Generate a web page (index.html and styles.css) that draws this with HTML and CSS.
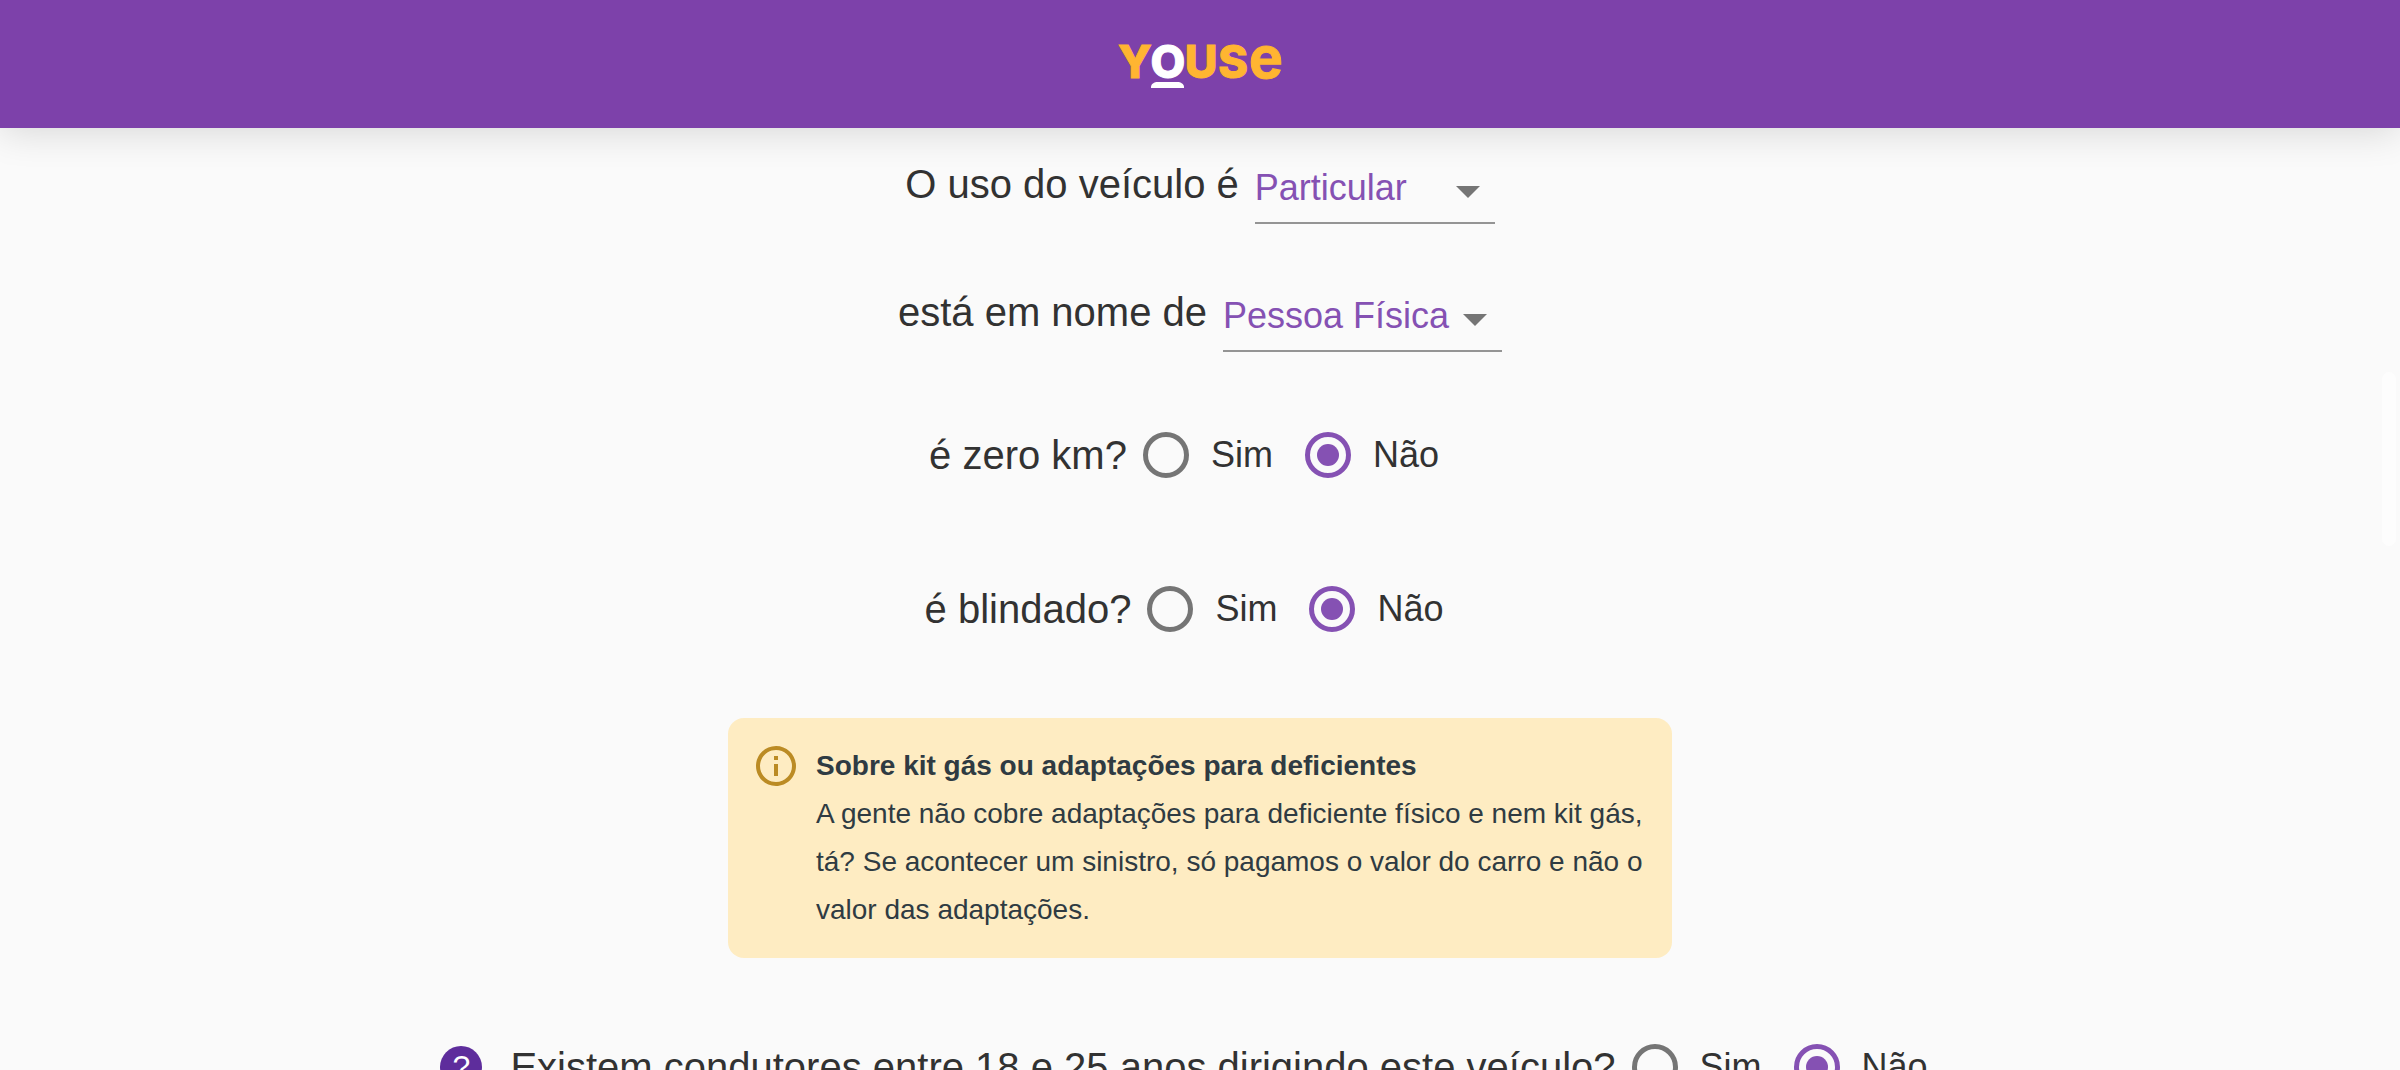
FILE: index.html
```html
<!DOCTYPE html>
<html lang="pt-BR">
<head>
<meta charset="utf-8">
<meta name="viewport" content="width=device-width, initial-scale=1">
<title>Youse</title>
<link rel="stylesheet" href="styles.css">
</head>
<body>
<header class="header">
  <svg class="logo" width="168" height="44" viewBox="0 0 168 44">
    <g class="logo-caps">
      <text x="19" y="34">Y</text>
      <text x="85" y="34">U</text>
      <text x="117" y="34">S</text>
      <text class="logo-o" x="52" y="34">O</text>
    </g>
    <text class="logo-e" x="150" y="34">e</text>
    <path class="logo-base" d="M35 44v-1c0-3 3-5 7-5h19c4 0 7 2 7 5v1z"/>
  </svg>
</header>

<main class="page">
  <form class="form">
    <div class="row">
      <label class="question" for="uso">O uso do veículo é</label>
      <span class="select">
        <select id="uso">
          <option>Particular</option>
        </select>
        <svg class="select-arrow" width="24" height="12" viewBox="0 0 24 12"><path d="M0 0h24L12 12z"/></svg>
      </span>
    </div>
    <div class="row">
      <label class="question" for="titular">está em nome de</label>
      <span class="select">
        <select id="titular">
          <option>Pessoa Física</option>
        </select>
        <svg class="select-arrow" width="24" height="12" viewBox="0 0 24 12"><path d="M0 0h24L12 12z"/></svg>
      </span>
    </div>

    <div class="choices">
      <div class="row row-choice" role="radiogroup" aria-labelledby="q-zero">
        <span class="question" id="q-zero">é zero km?</span>
        <label class="choice"><input type="radio" name="zero" value="sim">Sim</label>
        <label class="choice"><input type="radio" name="zero" value="nao" checked>Não</label>
      </div>
      <div class="row row-choice" role="radiogroup" aria-labelledby="q-blindado">
        <span class="question" id="q-blindado">é blindado?</span>
        <label class="choice"><input type="radio" name="blindado" value="sim">Sim</label>
        <label class="choice"><input type="radio" name="blindado" value="nao" checked>Não</label>
      </div>
    </div>

    <aside class="notice">
      <svg class="notice-icon" width="48" height="48" viewBox="0 0 24 24"><path d="M11 7h2v2h-2zm0 4h2v6h-2zm1-9C6.480 2 2 6.480 2 12s4.480 10 10 10 10-4.480 10-10S17.520 2 12 2zm0 18c-4.410 0-8-3.590-8-8s3.590-8 8-8 8 3.590 8 8-3.590 8-8 8z"/></svg>
      <div class="notice-body">
        <strong class="notice-title">Sobre kit gás ou adaptações para deficientes</strong>
        <p class="notice-text">A gente não cobre adaptações para deficiente físico e nem kit gás, tá? Se acontecer um sinistro, só pagamos o valor do carro e não o valor das adaptações.</p>
      </div>
    </aside>

    <div class="row row-choice" role="radiogroup" aria-labelledby="q-condutores">
      <button class="help" type="button">?</button>
      <span class="question" id="q-condutores">Existem condutores entre 18 e 25 anos dirigindo este veículo?</span>
      <label class="choice"><input type="radio" name="condutores" value="sim">Sim</label>
      <label class="choice"><input type="radio" name="condutores" value="nao" checked>Não</label>
    </div>
  </form>
</main>
<div class="scroll-thumb"></div>
</body>
</html>
```
FILE: styles.css
```css
* {
  box-sizing: border-box;
}

body {
  display: flex;
  flex-direction: column;
  height: 100vh;
  margin: 0;
  overflow: hidden;
  background: #fafafa;
  color: #323232;
  font-family: "Liberation Sans", Arial, Helvetica, sans-serif;
}

/* Header */
.header {
  flex: none;
  display: flex;
  align-items: center;
  justify-content: center;
  padding: 44px 24px 40px;
  background: #7d41aa;
  box-shadow: 0 4px 36px rgba(0, 0, 0, 0.14);
  z-index: 1;
}

.logo {
  display: block;
  overflow: visible;
  font-family: Inter, "Liberation Sans", sans-serif;
  font-weight: 800;
  fill: #ffb531;
  stroke: #ffb531;
  stroke-width: 1;
  text-anchor: middle;
}

.logo-caps {
  font-size: 45px;
}

.logo-e {
  font-size: 57px;
  font-weight: 700;
}

.logo-o {
  fill: #fff;
  stroke: #fff;
}

.logo-base {
  fill: #fff;
  stroke: none;
}

/* Form */
.page {
  flex: 1;
  min-height: 0;
  overflow: hidden;
}

.form {
  display: flex;
  flex-direction: column;
  align-items: center;
  gap: 48px;
  padding: 16px 24px;
}

.choices {
  display: flex;
  flex-direction: column;
  align-items: center;
  gap: 48px;
  padding-top: 2px;
}

.row {
  display: flex;
  align-items: center;
  justify-content: center;
  min-height: 80px;
}

.row-choice {
  min-height: 106px;
}

.question {
  margin-right: 16px;
  font-size: 40px;
  line-height: 48px;
}

.select {
  position: relative;
  color: #8551b3;
}

.select select {
  display: block;
  min-width: 240px;
  height: 80px;
  margin: 0;
  padding: 8px 52px 0 0;
  appearance: none;
  border: 0;
  border-bottom: 2px solid #949494;
  border-radius: 0;
  background: none;
  color: inherit;
  font-family: inherit;
  font-size: 36px;
}

.select-arrow {
  position: absolute;
  top: 42px;
  right: 15px;
  fill: #757575;
  pointer-events: none;
}

.choice {
  display: flex;
  align-items: center;
  gap: 22px;
  margin-right: 32px;
  font-size: 36px;
  line-height: 48px;
}

.choice input {
  width: 46px;
  height: 46px;
  margin: 0;
  padding: 7px;
  appearance: none;
  border: 5px solid #757575;
  border-radius: 50%;
}

.choice input:checked {
  border-color: #8551b3;
  background: #8551b3 content-box;
}

.help {
  width: 42px;
  height: 42px;
  margin: 0 28px 0 0;
  padding: 0;
  border: 0;
  border-radius: 50%;
  background: #5e2d9c;
  color: #fff;
  font-family: inherit;
  font-size: 32px;
  line-height: 42px;
}

/* Notice */
.notice {
  display: flex;
  gap: 16px;
  width: 100%;
  max-width: 944px;
  margin: 8px 0;
  padding: 24px;
  border-radius: 16px;
  background: #feecc2;
  color: #2f3b42;
  font-size: 28px;
  line-height: 48px;
}

.notice-icon {
  flex: none;
  fill: #bb8b24;
}

.notice-title {
  display: block;
}

.notice-text {
  margin: 0;
}

/* Overlay scroll indicator */
.scroll-thumb {
  position: absolute;
  top: 372px;
  right: 4px;
  width: 14px;
  height: 174px;
  border-radius: 7px;
  background: #fdfdfd;
}
```
